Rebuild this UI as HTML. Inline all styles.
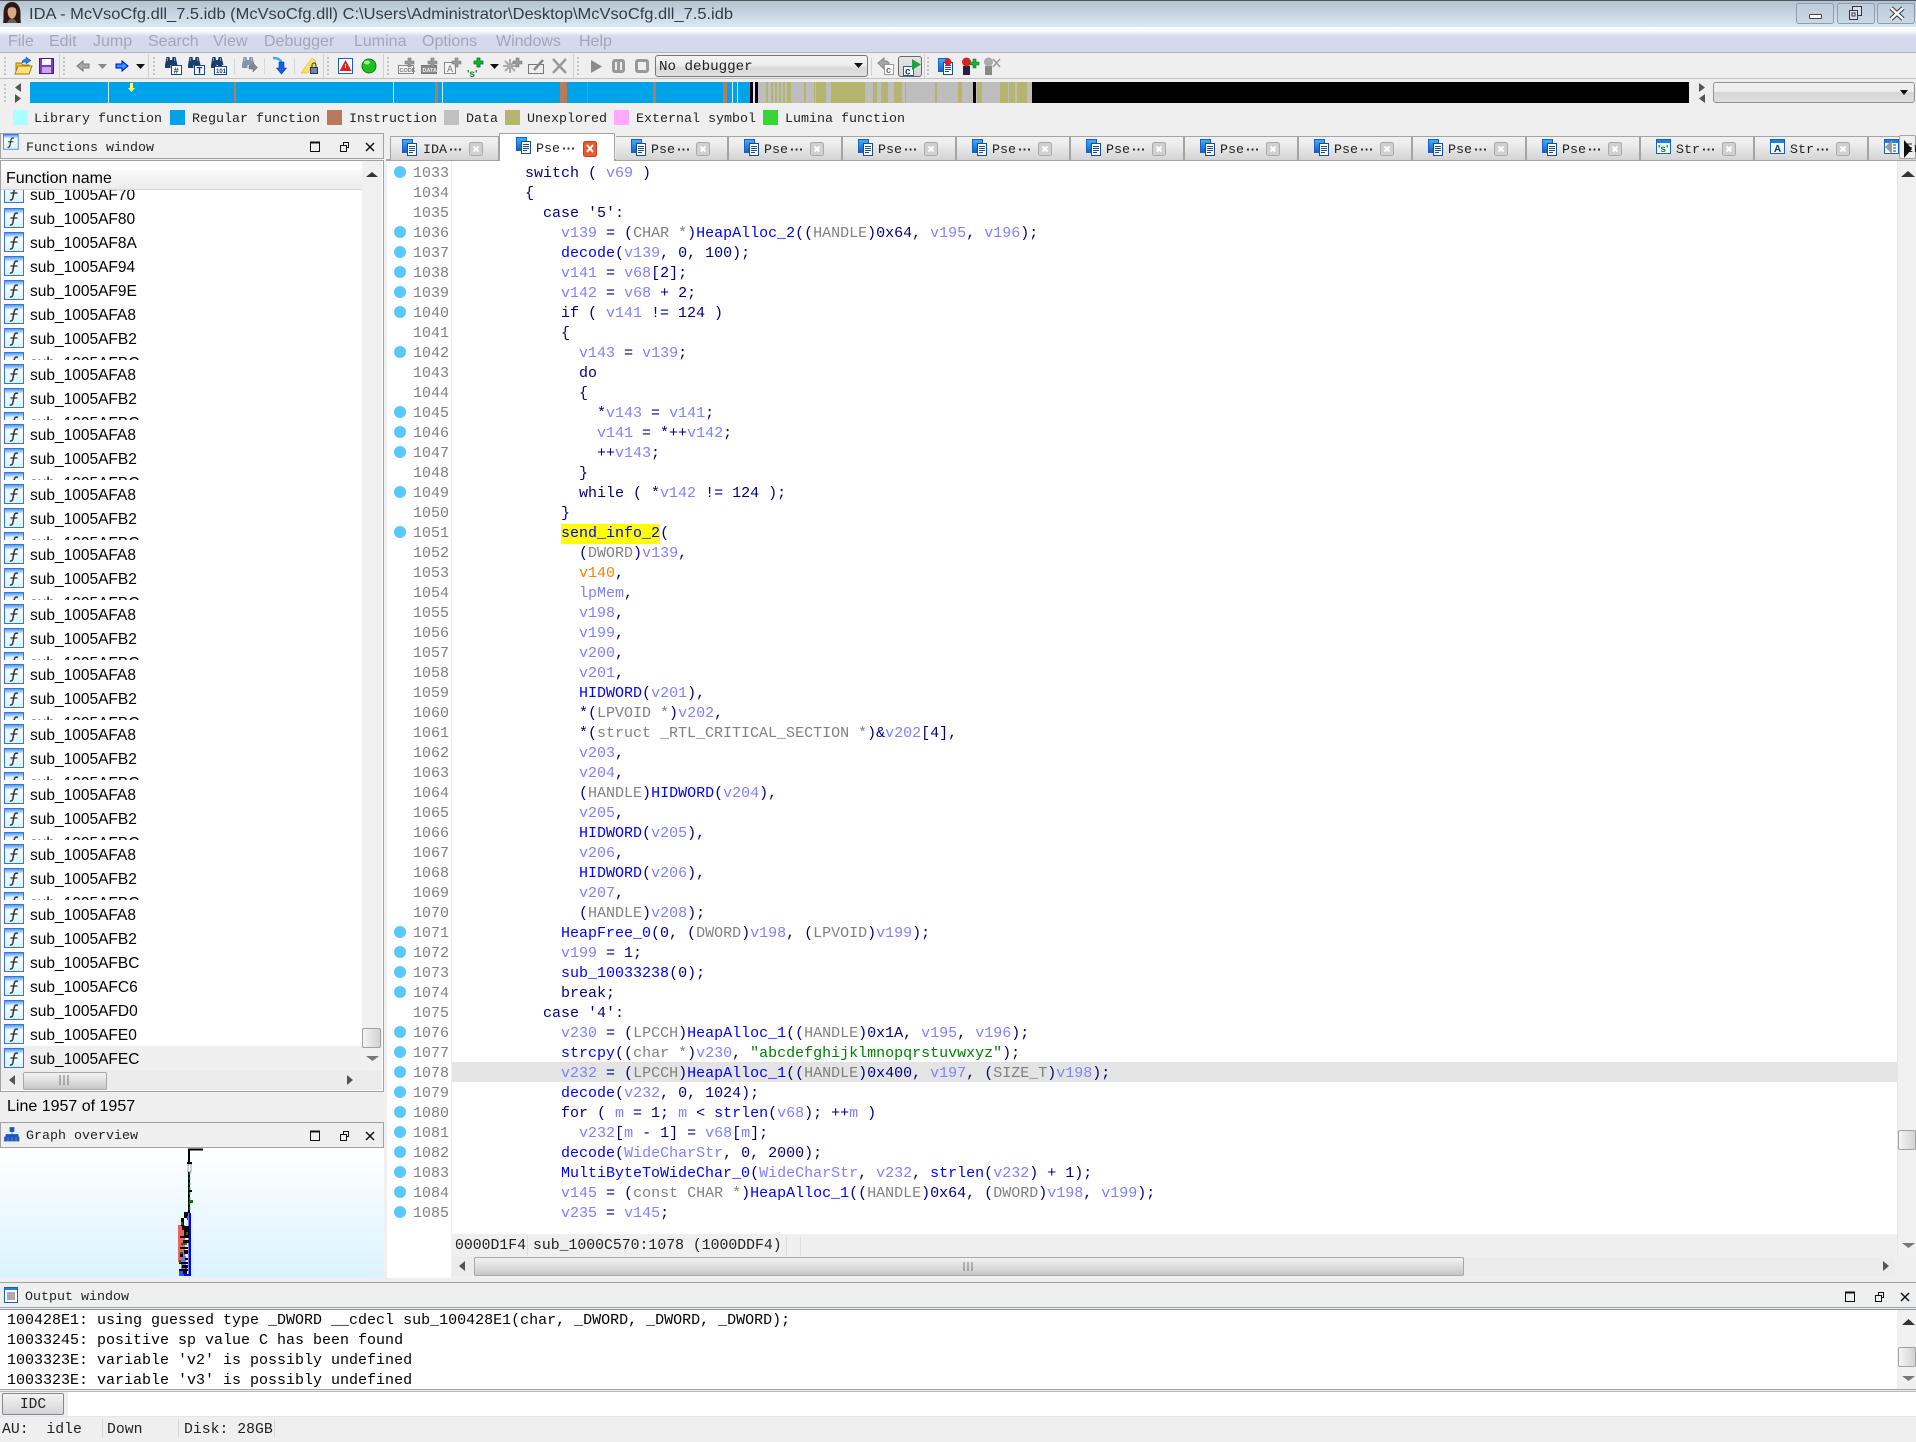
<!DOCTYPE html>
<html><head><meta charset="utf-8"><title>IDA</title>
<style>
html,body{margin:0;padding:0;background:#efefef}
body{position:relative;width:1916px;height:1439px;overflow:hidden;font-family:"Liberation Sans",sans-serif}
div,pre,span.a{position:absolute;margin:0}
pre{font:15px/20px "Liberation Mono","DejaVu Sans Mono",monospace}
.mt{font:13.33px/25px "Liberation Mono","DejaVu Sans Mono",monospace;color:#222;white-space:pre}
.mi{top:27px;height:25px;font-size:16px;line-height:30px;color:#a0a8b6;white-space:pre}
#code{left:453px;top:164px;color:#000080;z-index:3}
#nums{left:413px;top:164px;color:#808080;z-index:3}
i{font-style:normal}
.v{color:#8080ff}.f{color:#0000ff}.t{color:#808080}.s{color:#008000}.o{color:#ff8000}
.y{background:#ffff00;display:inline-block;height:20px;vertical-align:top}
.d{letter-spacing:-3.5px;font-weight:bold}
.r{left:1px;width:361px;height:24px;overflow:hidden;background:#fff}
.r svg{position:absolute;left:3px;top:2px}
.r b{position:absolute;left:29px;top:2px;font:15.5px/24px "Liberation Sans",sans-serif;color:#000;white-space:pre}
.tab{top:136px;height:23px;background:linear-gradient(#f1f1f1,#ededed 30%,#d4d4d4);border-top:1px solid #a4a4a4;border-right:2px solid #a4a4a4}
.tt{position:absolute;left:35px;top:1px;font:13.33px/25px "Liberation Mono","DejaVu Sans Mono",monospace;color:#222;white-space:pre}
.sl{height:1px;background:#a2a2a2;left:0;width:1916px}
.th{background:linear-gradient(90deg,#f4f4f4,#d2d2d2);border:1px solid #a0a0a0;border-radius:2px;box-sizing:border-box}
.hh{background:linear-gradient(#f2f2f2,#dedede 50%,#c6c6c6);border:1px solid #a8a8a8;border-radius:2px;box-sizing:border-box}
.st{font:14.8px/23px "Liberation Mono","DejaVu Serif",monospace;color:#222;white-space:pre;top:1419px}
.lg{top:110px;width:15px;height:15px}
.ll{top:107px}
.b{top:82px;height:21px}
</style></head><body>

<!-- title bar -->
<div style="left:0;top:0;width:1916px;height:27px;background:linear-gradient(#b3c3d1,#dbe8f2);border-top:1px solid #555;box-sizing:border-box"></div>
<!-- menu -->
<div style="left:0;top:27px;width:1916px;height:25px;background:linear-gradient(#fff,#f4f6fb 20%,#d4daec 38%,#d4daec);border-bottom:1px solid #b2b6c4"></div>
<div class="mi" style="left:8px">File</div><div class="mi" style="left:49px">Edit</div><div class="mi" style="left:93px">Jump</div><div class="mi" style="left:148px">Search</div><div class="mi" style="left:213px">View</div><div class="mi" style="left:264px">Debugger</div><div class="mi" style="left:354px">Lumina</div><div class="mi" style="left:422px">Options</div><div class="mi" style="left:496px">Windows</div><div class="mi" style="left:579px">Help</div>
<!-- toolbar rule -->
<div style="left:0;top:78px;width:1916px;height:1px;background:#c0c0c0"></div>

<!-- nav band -->
<div class="b" style="left:30px;width:720px;background:#00a2e8"></div>
<div class="b" style="left:108px;width:1px;background:#cfeeff"></div>
<div class="b" style="left:234px;width:2px;background:#b87a5c"></div>
<div class="b" style="left:393px;width:1px;background:#cfeeff"></div>
<div class="b" style="left:435px;width:3px;background:#b87a5c"></div>
<div class="b" style="left:442px;width:1px;background:#cfeeff"></div>
<div class="b" style="left:560px;width:7px;background:#b87a5c"></div>
<div class="b" style="left:587px;width:1px;background:#b87a5c"></div>
<div class="b" style="left:653px;width:3px;background:#b87a5c"></div>
<div class="b" style="left:723px;width:4px;background:#b87a5c"></div>
<div class="b" style="left:732px;width:1px;background:#cfeeff"></div>
<div class="b" style="left:737px;width:1px;background:#cfeeff"></div>
<div class="b" style="left:750px;width:3px;background:#000"></div>
<div class="b" style="left:753px;width:2px;background:#ffd0ff"></div>
<div class="b" style="left:755px;width:3px;background:#000"></div>
<div class="b" style="left:758px;width:274px;background:#bdbdbd"></div>
<div class="b" style="left:766px;width:2px;background:#b5b56e"></div><div class="b" style="left:771px;width:2px;background:#b5b56e"></div><div class="b" style="left:775px;width:2px;background:#b5b56e"></div><div class="b" style="left:779px;width:2px;background:#b5b56e"></div><div class="b" style="left:783px;width:2px;background:#b5b56e"></div><div class="b" style="left:787px;width:4px;background:#b5b56e"></div>
<div class="b" style="left:804px;width:2px;background:#b5b56e"></div><div class="b" style="left:814px;width:1px;background:#b5b56e"></div><div class="b" style="left:816px;width:10px;background:#b5b56e"></div><div class="b" style="left:831px;width:34px;background:#b5b56e"></div>
<div class="b" style="left:873px;width:4px;background:#b5b56e"></div><div class="b" style="left:881px;width:7px;background:#b5b56e"></div><div class="b" style="left:894px;width:8px;background:#b5b56e"></div><div class="b" style="left:905px;width:1px;background:#b5b56e"></div><div class="b" style="left:935px;width:2px;background:#b5b56e"></div><div class="b" style="left:958px;width:4px;background:#b5b56e"></div>
<div class="b" style="left:973px;width:3px;background:#000"></div><div class="b" style="left:977px;width:5px;background:#b5b56e"></div>
<div class="b" style="left:1000px;width:8px;background:#b5b56e"></div><div class="b" style="left:1009px;width:6px;background:#b5b56e"></div><div class="b" style="left:1017px;width:10px;background:#b5b56e"></div>
<div class="b" style="left:1032px;width:657px;background:#000"></div>

<!-- combo right -->
<div style="left:1713px;top:82px;width:200px;height:19px;border:1px solid #909090;border-radius:3px;background:linear-gradient(#f0f0f0,#ededed 45%,#d6d6d6 50%,#dedede)"></div>

<!-- legend -->
<div class="lg" style="left:13px;background:#aaffff"></div><div class="mt ll" style="left:34px">Library function</div>
<div class="lg" style="left:170px;background:#00a2e8"></div><div class="mt ll" style="left:192px">Regular function</div>
<div class="lg" style="left:327px;background:#b87a5c"></div><div class="mt ll" style="left:349px">Instruction</div>
<div class="lg" style="left:444px;background:#c0c0c0"></div><div class="mt ll" style="left:466px">Data</div>
<div class="lg" style="left:505px;background:#b5b56e"></div><div class="mt ll" style="left:527px">Unexplored</div>
<div class="lg" style="left:614px;background:#ffaaff"></div><div class="mt ll" style="left:636px">External symbol</div>
<div class="lg" style="left:763px;background:#33d633"></div><div class="mt ll" style="left:785px">Lumina function</div>

<!-- Functions window -->
<div style="left:0;top:133px;width:382px;height:24px;border:1px solid #a2a2a2;background:#efefef"></div>
<div class="mt" style="left:26px;top:136px">Functions window</div>
<div style="left:0;top:160px;width:382px;height:930px;border:1px solid #a2a2a2;background:#fff"></div>
<div style="left:362px;top:161px;width:20px;height:929px;background:#f0f0f0"></div>
<div class="th" style="left:362px;top:1028px;width:19px;height:20px"></div>

<div style="left:1px;top:161px;width:361px;height:29px;background:linear-gradient(#fff 30%,#f8f8f8 35%,#ececec);border-bottom:1px solid #d4d4d4;z-index:4;box-sizing:border-box"></div>
<div style="left:6px;top:169px;font:16px/20px 'Liberation Sans',sans-serif;color:#000;z-index:5">Function name</div>

<div class="r" style="top:190px;height:16px"><svg width="20" height="20" style="top:-7px"><use href="#fi"/></svg><b style="top:-6px">sub_1005AF70</b></div>
<div class="r" style="top:206px"><svg width="20" height="20"><use href="#fi"/></svg><b>sub_1005AF80</b></div>
<div class="r" style="top:230px"><svg width="20" height="20"><use href="#fi"/></svg><b>sub_1005AF8A</b></div>
<div class="r" style="top:254px"><svg width="20" height="20"><use href="#fi"/></svg><b>sub_1005AF94</b></div>
<div class="r" style="top:278px"><svg width="20" height="20"><use href="#fi"/></svg><b>sub_1005AF9E</b></div>
<div class="r" style="top:302px"><svg width="20" height="20"><use href="#fi"/></svg><b>sub_1005AFA8</b></div>
<div class="r" style="top:326px"><svg width="20" height="20"><use href="#fi"/></svg><b>sub_1005AFB2</b></div>
<div class="r" style="top:350px;height:10px"><svg width="20" height="20"><use href="#fi"/></svg><b>sub_1005AFBC</b></div>

<div class="r" style="top:362px"><svg width="20" height="20"><use href="#fi"/></svg><b>sub_1005AFA8</b></div>
<div class="r" style="top:386px"><svg width="20" height="20"><use href="#fi"/></svg><b>sub_1005AFB2</b></div>
<div class="r" style="top:410px;height:10px"><svg width="20" height="20"><use href="#fi"/></svg><b>sub_1005AFBC</b></div>
<div class="r" style="top:422px"><svg width="20" height="20"><use href="#fi"/></svg><b>sub_1005AFA8</b></div>
<div class="r" style="top:446px"><svg width="20" height="20"><use href="#fi"/></svg><b>sub_1005AFB2</b></div>
<div class="r" style="top:470px;height:10px"><svg width="20" height="20"><use href="#fi"/></svg><b>sub_1005AFBC</b></div>
<div class="r" style="top:482px"><svg width="20" height="20"><use href="#fi"/></svg><b>sub_1005AFA8</b></div>
<div class="r" style="top:506px"><svg width="20" height="20"><use href="#fi"/></svg><b>sub_1005AFB2</b></div>
<div class="r" style="top:530px;height:10px"><svg width="20" height="20"><use href="#fi"/></svg><b>sub_1005AFBC</b></div>
<div class="r" style="top:542px"><svg width="20" height="20"><use href="#fi"/></svg><b>sub_1005AFA8</b></div>
<div class="r" style="top:566px"><svg width="20" height="20"><use href="#fi"/></svg><b>sub_1005AFB2</b></div>
<div class="r" style="top:590px;height:10px"><svg width="20" height="20"><use href="#fi"/></svg><b>sub_1005AFBC</b></div>
<div class="r" style="top:602px"><svg width="20" height="20"><use href="#fi"/></svg><b>sub_1005AFA8</b></div>
<div class="r" style="top:626px"><svg width="20" height="20"><use href="#fi"/></svg><b>sub_1005AFB2</b></div>
<div class="r" style="top:650px;height:10px"><svg width="20" height="20"><use href="#fi"/></svg><b>sub_1005AFBC</b></div>
<div class="r" style="top:662px"><svg width="20" height="20"><use href="#fi"/></svg><b>sub_1005AFA8</b></div>
<div class="r" style="top:686px"><svg width="20" height="20"><use href="#fi"/></svg><b>sub_1005AFB2</b></div>
<div class="r" style="top:710px;height:10px"><svg width="20" height="20"><use href="#fi"/></svg><b>sub_1005AFBC</b></div>
<div class="r" style="top:722px"><svg width="20" height="20"><use href="#fi"/></svg><b>sub_1005AFA8</b></div>
<div class="r" style="top:746px"><svg width="20" height="20"><use href="#fi"/></svg><b>sub_1005AFB2</b></div>
<div class="r" style="top:770px;height:10px"><svg width="20" height="20"><use href="#fi"/></svg><b>sub_1005AFBC</b></div>
<div class="r" style="top:782px"><svg width="20" height="20"><use href="#fi"/></svg><b>sub_1005AFA8</b></div>
<div class="r" style="top:806px"><svg width="20" height="20"><use href="#fi"/></svg><b>sub_1005AFB2</b></div>
<div class="r" style="top:830px;height:10px"><svg width="20" height="20"><use href="#fi"/></svg><b>sub_1005AFBC</b></div>
<div class="r" style="top:842px"><svg width="20" height="20"><use href="#fi"/></svg><b>sub_1005AFA8</b></div>
<div class="r" style="top:866px"><svg width="20" height="20"><use href="#fi"/></svg><b>sub_1005AFB2</b></div>
<div class="r" style="top:890px;height:10px"><svg width="20" height="20"><use href="#fi"/></svg><b>sub_1005AFBC</b></div>
<div class="r" style="top:902px"><svg width="20" height="20"><use href="#fi"/></svg><b>sub_1005AFA8</b></div>
<div class="r" style="top:926px"><svg width="20" height="20"><use href="#fi"/></svg><b>sub_1005AFB2</b></div>
<div class="r" style="top:950px"><svg width="20" height="20"><use href="#fi"/></svg><b>sub_1005AFBC</b></div>
<div class="r" style="top:974px"><svg width="20" height="20"><use href="#fi"/></svg><b>sub_1005AFC6</b></div>
<div class="r" style="top:998px"><svg width="20" height="20"><use href="#fi"/></svg><b>sub_1005AFD0</b></div>
<div class="r" style="top:1022px"><svg width="20" height="20"><use href="#fi"/></svg><b>sub_1005AFE0</b></div>
<div class="r" style="top:1046px;height:25px;background:#efefef"><svg width="20" height="20"><use href="#fi"/></svg><b>sub_1005AFEC</b></div>

<div style="left:1px;top:1071px;width:381px;height:19px;background:#ececec"></div>
<div class="hh" style="left:23px;top:1072px;width:84px;height:18px"></div>

<div style="left:7px;top:1095px;font:16px/24px 'Liberation Sans',sans-serif;color:#000;white-space:pre">Line 1957 of 1957</div>

<!-- Graph overview -->
<div style="left:0;top:1122px;width:382px;height:24px;border:1px solid #a2a2a2;background:#efefef"></div>
<div class="mt" style="left:26px;top:1124px">Graph overview</div>
<div style="left:0;top:1148px;width:384px;height:130px;background:linear-gradient(#fff,#dbf3ff)"></div>

<!-- tabs -->
<div style="left:386px;top:159px;width:1530px;height:2px;background:#a4a4a4"></div>
<div class="tab" style="left:390px;width:107px;border-left:1px solid #a4a4a4"><span class="tt" style="left:32px">IDA<i class="d">···</i></span></div>
<div class="tab" style="left:616px;width:111px"><span class="tt">Pse<i class="d">···</i></span></div>
<div class="tab" style="left:729px;width:112px"><span class="tt">Pse<i class="d">···</i></span></div>
<div class="tab" style="left:843px;width:112px"><span class="tt">Pse<i class="d">···</i></span></div>
<div class="tab" style="left:957px;width:112px"><span class="tt">Pse<i class="d">···</i></span></div>
<div class="tab" style="left:1071px;width:112px"><span class="tt">Pse<i class="d">···</i></span></div>
<div class="tab" style="left:1185px;width:112px"><span class="tt">Pse<i class="d">···</i></span></div>
<div class="tab" style="left:1299px;width:112px"><span class="tt">Pse<i class="d">···</i></span></div>
<div class="tab" style="left:1413px;width:112px"><span class="tt">Pse<i class="d">···</i></span></div>
<div class="tab" style="left:1527px;width:112px"><span class="tt">Pse<i class="d">···</i></span></div>
<div class="tab" style="left:1641px;width:112px"><span class="tt">Str<i class="d">···</i></span></div>
<div class="tab" style="left:1755px;width:112px"><span class="tt">Str<i class="d">···</i></span></div>
<div class="tab" style="left:1869px;width:47px;border-right:0"></div>
<div style="left:499px;top:133px;width:116px;height:28px;background:#fff;border:1px solid #a4a4a4;border-bottom:0;box-sizing:border-box"><span class="tt" style="left:36px;top:3px">Pse<i class="d">···</i></span></div>
<div style="left:1899px;top:135px;width:17px;height:24px;background:#efefef;border:1px solid #a4a4a4;border-radius:2px;box-sizing:border-box"></div>
<div class="mt" style="left:1905px;top:137px;width:11px;overflow:hidden;z-index:2">Er</div>

<!-- code view -->
<div style="left:387px;top:161px;width:64px;height:1117px;background:#fff"></div>
<div style="left:451px;top:161px;width:1px;height:1073px;background:#f0f0f0"></div>
<div style="left:452px;top:161px;width:1445px;height:1073px;background:#fff"></div>
<div style="left:1897px;top:161px;width:19px;height:1095px;background:#f0f0f0;border-left:1px solid #e6e6e6;box-sizing:border-box"></div>
<div class="th" style="left:1898px;top:1130px;width:18px;height:20px"></div>
<div style="left:452px;top:1062px;width:1445px;height:20px;background:#e4e4e4"></div>

<pre id="nums">1033
1034
1035
1036
1037
1038
1039
1040
1041
1042
1043
1044
1045
1046
1047
1048
1049
1050
1051
1052
1053
1054
1055
1056
1057
1058
1059
1060
1061
1062
1063
1064
1065
1066
1067
1068
1069
1070
1071
1072
1073
1074
1075
1076
1077
1078
1079
1080
1081
1082
1083
1084
1085</pre>

<pre id="code">        switch ( <i class="v">v69</i> )
        {
          case '5':
            <i class="v">v139</i> = (<i class="t">CHAR *</i>)<i class="f">HeapAlloc_2</i>((<i class="t">HANDLE</i>)0x64, <i class="v">v195</i>, <i class="v">v196</i>);
            <i class="f">decode</i>(<i class="v">v139</i>, 0, 100);
            <i class="v">v141</i> = <i class="v">v68</i>[2];
            <i class="v">v142</i> = <i class="v">v68</i> + 2;
            if ( <i class="v">v141</i> != 124 )
            {
              <i class="v">v143</i> = <i class="v">v139</i>;
              do
              {
                *<i class="v">v143</i> = <i class="v">v141</i>;
                <i class="v">v141</i> = *++<i class="v">v142</i>;
                ++<i class="v">v143</i>;
              }
              while ( *<i class="v">v142</i> != 124 );
            }
            <i class="f y">send_info_2</i>(
              (<i class="t">DWORD</i>)<i class="v">v139</i>,
              <i class="o">v140</i>,
              <i class="v">lpMem</i>,
              <i class="v">v198</i>,
              <i class="v">v199</i>,
              <i class="v">v200</i>,
              <i class="v">v201</i>,
              <i class="f">HIDWORD</i>(<i class="v">v201</i>),
              *(<i class="t">LPVOID *</i>)<i class="v">v202</i>,
              *(<i class="t">struct _RTL_CRITICAL_SECTION *</i>)&amp;<i class="v">v202</i>[4],
              <i class="v">v203</i>,
              <i class="v">v204</i>,
              (<i class="t">HANDLE</i>)<i class="f">HIDWORD</i>(<i class="v">v204</i>),
              <i class="v">v205</i>,
              <i class="f">HIDWORD</i>(<i class="v">v205</i>),
              <i class="v">v206</i>,
              <i class="f">HIDWORD</i>(<i class="v">v206</i>),
              <i class="v">v207</i>,
              (<i class="t">HANDLE</i>)<i class="v">v208</i>);
            <i class="f">HeapFree_0</i>(0, (<i class="t">DWORD</i>)<i class="v">v198</i>, (<i class="t">LPVOID</i>)<i class="v">v199</i>);
            <i class="v">v199</i> = 1;
            <i class="f">sub_10033238</i>(0);
            break;
          case '4':
            <i class="v">v230</i> = (<i class="t">LPCCH</i>)<i class="f">HeapAlloc_1</i>((<i class="t">HANDLE</i>)0x1A, <i class="v">v195</i>, <i class="v">v196</i>);
            <i class="f">strcpy</i>((<i class="t">char *</i>)<i class="v">v230</i>, <i class="s">"abcdefghijklmnopqrstuvwxyz"</i>);
            <i class="v">v232</i> = (<i class="t">LPCCH</i>)<i class="f">HeapAlloc_1</i>((<i class="t">HANDLE</i>)0x400, <i class="v">v197</i>, (<i class="t">SIZE_T</i>)<i class="v">v198</i>);
            <i class="f">decode</i>(<i class="v">v232</i>, 0, 1024);
            for ( <i class="v">m</i> = 1; <i class="v">m</i> &lt; <i class="f">strlen</i>(<i class="v">v68</i>); ++<i class="v">m</i> )
              <i class="v">v232</i>[<i class="v">m</i> - 1] = <i class="v">v68</i>[<i class="v">m</i>];
            <i class="f">decode</i>(<i class="v">WideCharStr</i>, 0, 2000);
            <i class="f">MultiByteToWideChar_0</i>(<i class="v">WideCharStr</i>, <i class="v">v232</i>, <i class="f">strlen</i>(<i class="v">v232</i>) + 1);
            <i class="v">v145</i> = (<i class="t">const CHAR *</i>)<i class="f">HeapAlloc_1</i>((<i class="t">HANDLE</i>)0x64, (<i class="t">DWORD</i>)<i class="v">v198</i>, <i class="v">v199</i>);
            <i class="v">v235</i> = <i class="v">v145</i>;</pre>

<!-- code status / hscroll -->
<div style="left:452px;top:1234px;width:1445px;height:23px;background:#efefef"></div>
<div class="st" style="left:455px;top:1235px">0000D1F4</div>
<div class="st" style="left:533px;top:1235px">sub_1000C570:1078 (1000DDF4)</div>
<div style="left:527px;top:1236px;width:1px;height:20px;background:#dcdcdc"></div>
<div style="left:786px;top:1236px;width:1px;height:20px;background:#dcdcdc"></div>
<div style="left:800px;top:1236px;width:1px;height:20px;background:#dcdcdc"></div>
<div style="left:452px;top:1257px;width:1443px;height:19px;background:#ececec"></div>
<div class="hh" style="left:474px;top:1257px;width:990px;height:19px"></div>

<!-- output window -->
<div class="sl" style="top:1282px"></div>
<div class="mt" style="left:25px;top:1285px">Output window</div>
<div class="sl" style="top:1307px"></div>
<div class="sl" style="top:1309px;background:#8a929a"></div>
<div style="left:0;top:1310px;width:1916px;height:79px;background:#fff"></div>
<div style="left:1897px;top:1310px;width:19px;height:79px;background:#f0f0f0"></div>
<div class="th" style="left:1898px;top:1347px;width:18px;height:20px"></div>
<pre style="left:7px;top:1311px;color:#000">100428E1: using guessed type _DWORD __cdecl sub_100428E1(char, _DWORD, _DWORD, _DWORD);
10033245: positive sp value C has been found
1003323E: variable 'v2' is possibly undefined
1003323E: variable 'v3' is possibly undefined</pre>
<div class="sl" style="top:1389px"></div>
<div class="sl" style="top:1391px;background:#b8b8b8"></div>
<div style="left:68px;top:1392px;width:1848px;height:24px;background:#fff"></div>
<div class="hh" style="left:2px;top:1393px;width:62px;height:22px;background:linear-gradient(#f4f4f4,#e4e4e4 50%,#d4d4d4);border-color:#888;font:14.5px/23px 'Liberation Mono',monospace;color:#222;text-align:center">IDC</div>
<div style="left:0;top:1416px;width:1916px;height:1px;background:#e2e6ee"></div>
<div class="st" style="left:2px">AU:  idle</div>
<div class="st" style="left:107px">Down</div>
<div class="st" style="left:184px">Disk: 28GB</div>
<div style="left:102px;top:1419px;width:1px;height:18px;background:#d8d8d8"></div>
<div style="left:178px;top:1419px;width:1px;height:18px;background:#d8d8d8"></div>
<div style="left:274px;top:1419px;width:1px;height:18px;background:#d8d8d8"></div>

<!-- combo debugger -->
<div style="left:655px;top:55px;width:211px;height:20px;border:1px solid #777;border-radius:3px;background:linear-gradient(#f2f2f2,#eeeeee 45%,#d8d8d8 60%,#e0e0e0);font:14.2px/23px 'Liberation Mono',monospace;color:#222;text-indent:3px">No debugger</div>
<div style="left:898px;top:56px;width:22px;height:19px;border:1px solid #666;border-radius:3px;background:linear-gradient(#e4e4e4,#d4d4d4)"></div>

<!-- overlay icons -->
<svg width="1916" height="1439" viewBox="0 0 1916 1439" style="position:absolute;left:0;top:0;z-index:6" xmlns="http://www.w3.org/2000/svg">
<defs>
<linearGradient id="gf" x1="0" y1="0" x2="0" y2="1"><stop offset="0" stop-color="#3f8df0"/><stop offset=".2" stop-color="#9fd0ff"/><stop offset=".3" stop-color="#f2fcff"/><stop offset="1" stop-color="#d8f4ff"/></linearGradient>
<linearGradient id="gb" x1="0" y1="0" x2="0" y2="1"><stop offset="0" stop-color="#40b0ff"/><stop offset="1" stop-color="#1060c0"/></linearGradient>
<g id="doc"><rect x=".5" y=".5" width="10" height="13" fill="url(#gb)" stroke="#1a5fc0"/><rect x="5.500" y="4.500" width="9" height="12" fill="#fff" stroke="#1a4a90"/><path d="M7 7.500h6M7 9.500h6M7 11.500h6M7 13.500h4" stroke="#1a4a90" fill="none"/></g>
<g id="bino"><path d="M1.500 0h3l.5 3h2l.5-3h3l2 8H0z" fill="#1c3c6c"/><path d="M0 8h5.500v3H0zM7 8h4v3H7z" fill="#1c3c6c"/><path d="M2 1h1v3H2zM9 1h1v3H9z" fill="#6a9ad0"/></g>
<g id="xbtn"><rect x=".5" y=".5" width="13" height="13" rx="2" fill="#d0d0d0" stroke="#aaa"/><path d="M4.500 4.500l5 5M9.500 4.500l-5 5" stroke="#fff" stroke-width="2"/></g>
<g id="dots"><path d="M0 0h2v2H0zM0 4h2v2H0zM0 8h2v2H0zM0 12h2v2H0zM0 16h2v2H0z" fill="#c4c4c4"/></g>
<path id="plusg" d="M3 0h3v3h3v3H6v3H3V6H0V3h3z" fill="#999" stroke="#777" stroke-width=".6"/>
</defs>

<!-- title -->
<path d="M3 23c1-4 0-10 1-14 1-5 5-7 8-7 4 0 7 3 8 7 1 4 0 10 1 14z" fill="#2a1a14"/><path d="M8 9c1-2 6-3 8 0 1 3 0 7-2 9l-2 1-2-1c-2-2-3-6-2-9z" fill="#d8a888"/><path d="M7 23c1-3 3-4 5-4s4 1 5 4z" fill="#7a5a50"/>
<text x="29" y="19" font-family="Liberation Sans" font-size="16" fill="#333d47" textLength="704" lengthAdjust="spacingAndGlyphs">IDA - McVsoCfg.dll_7.5.idb (McVsoCfg.dll) C:\Users\Administrator\Desktop\McVsoCfg.dll_7.5.idb</text>
<g fill="#c2d0dc" fill-opacity=".6" stroke="#8c9db3"><rect x="1796.500" y="3.500" width="37" height="20" rx="2"/><rect x="1837.500" y="3.500" width="37" height="20" rx="2"/><rect x="1877.500" y="3.500" width="37" height="20" rx="2"/></g>
<rect x="1809.500" y="14.500" width="12" height="4" rx="1" fill="#fff" stroke="#444"/>
<path d="M1852.500 6.500h9v9h-9z" fill="#d8e0e8" stroke="#334"/><rect x="1849.500" y="10.500" width="8" height="9" fill="#d8e0e8" stroke="#334"/><rect x="1852" y="13" width="3" height="3" fill="#fff" stroke="#334"/>
<path d="M1891 8l12 11M1903 8l-12 11" stroke="#334" stroke-width="4.500"/><path d="M1891 8l12 11M1903 8l-12 11" stroke="#fff" stroke-width="2.500"/>

<!-- toolbar -->
<use href="#dots" x="4" y="57"/><use href="#dots" x="63" y="57"/><use href="#dots" x="153" y="57"/><use href="#dots" x="327" y="57"/><use href="#dots" x="387" y="57"/><use href="#dots" x="577" y="57"/><use href="#dots" x="927" y="57"/><use href="#dots" x="4" y="84"/>
<path d="M59.500 54v24M148.500 54v24M323.500 54v24M383.500 54v24M573.500 54v24M871.500 58v18M924.500 54v24" stroke="#d0d0d0" fill="none"/>
<path d="M234.500 58v16M264.500 58v16M294.500 58v16" stroke="#d8d8d8" fill="none"/>
<!-- folder / save -->
<path d="M16 74V63h5l2 2h6v9z" fill="#f6c94a" stroke="#a87a10"/><path d="M15 74l3-8h14l-3 8z" fill="#ffe27a" stroke="#a87a10"/><path d="M22 63c0-3 2-4 4-4v-2l5 3.500-5 3.500v-2c-2 0-3 .5-4 1z" fill="#2a7fe0" stroke="#1050b0" stroke-width=".5"/>
<rect x="39.500" y="58.500" width="14" height="15" fill="#8038c8" stroke="#4a1a8a"/><rect x="42" y="59" width="9" height="6" fill="#fff"/><rect x="42" y="67" width="9" height="6" fill="#c8a8e8"/>
<!-- nav arrows toolbar -->
<path d="M77 66l6-5v3h6v4h-6v3z" fill="#a8a8a8" stroke="#777"/><path d="M98 64h9l-4.500 5z" fill="#888"/>
<path d="M128 66l-6-5v3h-6v4h6v3z" fill="#20a0f8" stroke="#0000e0"/><path d="M136 64h9l-4.500 5z" fill="#111"/>
<!-- search -->
<use href="#bino" x="165" y="57"/><rect x="171.500" y="65.500" width="10" height="9" fill="#fff" stroke="#14458a"/><text x="173.500" y="73.500" font-family="Liberation Mono" font-size="9" font-weight="bold" fill="#14355f">#</text>
<use href="#bino" x="188" y="57"/><rect x="194.500" y="65.500" width="10" height="9" fill="#fff" stroke="#14458a"/><text x="196.500" y="73.500" font-family="Liberation Mono" font-size="10" font-weight="bold" fill="#14355f">T</text>
<use href="#bino" x="211" y="57"/><rect x="214.500" y="66.500" width="12" height="8" fill="#fff" stroke="#14458a"/><text x="216" y="73" font-family="Liberation Sans" font-size="6" font-weight="bold" fill="#14355f">101</text>
<g opacity=".5"><use href="#bino" x="242" y="57"/></g><path d="M249 66h4v-3l4.500 4.500-4.500 4.500v-3h-4z" fill="#888" stroke="#666" stroke-width=".5"/>
<path d="M273 58c5 0 8 1.500 9 6" stroke="#30b0ff" stroke-width="2.500" fill="none"/><path d="M279 62h5v6h2.500l-5 6-5-6h2.500z" fill="#1060e0" stroke="#0a3f9a" stroke-width=".6"/>
<path d="M301 73l5-7 6-8 4 3-1 5h-4l-3 7z" fill="#ffe060" stroke="#d0a820" stroke-width=".5"/><rect x="310.500" y="67.500" width="7" height="6" fill="#6a88a8" stroke="#334"/><path d="M312 67v-2a2 2 0 014 0v2" stroke="#334" fill="none"/>
<!-- debug box -->
<rect x="338.500" y="58.500" width="14" height="15" fill="#fff" stroke="#1a5fc0"/><path d="M345.500 60l6 11h-12z" fill="#e02020"/><path d="M345.500 64v4" stroke="#fff"/>
<circle cx="369" cy="66" r="7" fill="#20c020" stroke="#108010"/><ellipse cx="367" cy="62.500" rx="3" ry="2" fill="#a0f0a0"/>
<!-- add icons -->
<rect x="398.500" y="65.500" width="15" height="8" fill="#f4f4f4" stroke="#888"/><text x="399.500" y="72" font-family="Liberation Sans" font-size="5.5" font-weight="bold" fill="#777">CODE</text><use href="#plusg" x="405" y="58"/>
<rect x="421.500" y="65.500" width="15" height="8" fill="#888" stroke="#777"/><text x="422.500" y="72" font-family="Liberation Sans" font-size="5.500" font-weight="bold" fill="#eee">DATA</text><use href="#plusg" x="428" y="58"/>
<rect x="444.500" y="62.500" width="11" height="11" fill="#f4f4f4" stroke="#888"/><text x="447" y="72" font-family="Liberation Sans" font-size="9" fill="#777">A</text><use href="#plusg" x="452" y="58"/>
<path d="M477 58h3v3h3v3h-3v3h-3v-3h-3v-3h3z" fill="#10c010" stroke="#064" stroke-width=".8"/><text x="467" y="77" font-family="Liberation Sans" font-size="10" font-weight="bold" fill="#208020">'s'</text>
<path d="M490 64h9l-4.500 5z" fill="#111"/>
<path d="M505 61l10 10M515 61l-10 10M510 59v14M503 66h14" stroke="#aaa" stroke-width="2"/><use href="#plusg" x="513" y="58"/>
<rect x="528.500" y="64.500" width="15" height="9" fill="#eee" stroke="#777"/><path d="M534 70l9-10" stroke="#888" stroke-width="2.500"/>
<path d="M553 59l13 14M566 59l-13 14" stroke="#999" stroke-width="2.500"/>
<path d="M591 60l11 6.500-11 6.500z" fill="#8a8a8a"/>
<rect x="612" y="59" width="13" height="14" rx="3" fill="#999"/><path d="M616 62v8M621 62v8" stroke="#eee" stroke-width="2"/>
<rect x="635" y="59" width="14" height="14" rx="3" fill="#999"/><rect x="638" y="62" width="8" height="8" fill="#eee"/>
<path d="M854 63h9l-4.500 5z" fill="#111"/>
<path d="M878 63l6-5v3h3l2 2v3h-5v3z" fill="#a8a8a8" stroke="#888"/><rect x="884.500" y="64.500" width="9" height="10" fill="#fff" stroke="#999"/><text x="886" y="73" font-family="Liberation Sans" font-size="9" font-weight="bold" fill="#666">c</text>
<rect x="903.500" y="66.500" width="10" height="9" fill="#fff" stroke="#1a5fc0"/><text x="905" y="74.500" font-family="Liberation Sans" font-size="10" font-weight="bold" fill="#14355f">c</text><path d="M912 59l9 5.500-9 5.500z" fill="#20a040"/>
<use href="#doc" x="938" y="58"/><circle cx="948" cy="62" r="3.500" fill="#e02020"/>
<rect x="963" y="66" width="7" height="9" fill="#224"/><circle cx="966.500" cy="62" r="4.500" fill="#e02020"/><path d="M973 59h3v3h3v3h-3v3h-3v-3h-3v-3h3z" fill="#20b020" stroke="#075" stroke-width=".6"/>
<rect x="985" y="66" width="7" height="9" fill="#888"/><circle cx="988.500" cy="62" r="4.500" fill="#aaa"/><path d="M993 59l7 8M1000 59l-7 8" stroke="#999" stroke-width="1.500"/>

<!-- nav arrows -->
<path d="M21 83v9l-6-4.500z M15 94v9l6-4.500z" fill="#555"/>
<path d="M1699 83v9l6-4.500z M1705 94v9l-6-4.500z" fill="#555"/>
<path d="M1900 90h8l-4 5z" fill="#111"/>
<path d="M130 83h3v5h2l-3.500 4-3.500-4h2z" fill="#ffff60"/>

<!-- panel title icons -->
<use href="#fi" transform="translate(3 134) scale(.78)"/>
<g fill="none" stroke="#111"><rect x="310.500" y="142.500" width="9" height="9" stroke-width="1"/><path d="M310 142.500h10" stroke-width="2"/><rect x="343.500" y="142.500" width="5" height="5"/><rect x="340.500" y="145.500" width="6" height="6" fill="#efefef"/><path d="M366 143l8 8M374 143l-8 8" stroke-width="1.500"/></g>
<g transform="translate(0 989)" fill="none" stroke="#111"><rect x="310.500" y="142.500" width="9" height="9" stroke-width="1"/><path d="M310 142.500h10" stroke-width="2"/><rect x="343.500" y="142.500" width="5" height="5"/><rect x="340.500" y="145.500" width="6" height="6" fill="#efefef"/><path d="M366 143l8 8M374 143l-8 8" stroke-width="1.500"/></g>
<g transform="translate(1535 1150)" fill="none" stroke="#111"><rect x="310.500" y="142.500" width="9" height="9" stroke-width="1"/><path d="M310 142.500h10" stroke-width="2"/><rect x="343.500" y="142.500" width="5" height="5"/><rect x="340.500" y="145.500" width="6" height="6" fill="#efefef"/><path d="M366 143l8 8M374 143l-8 8" stroke-width="1.500"/></g>

<!-- graph icon -->
<path d="M10 1127.500h4v4h-4zM4.500 1137h3v4h-3zM8.500 1137h3v4h-3zM12.500 1137h3v4h-3zM16.500 1137h2.500v4h-2.500zM6 1137v-2.500h12v2.500M12 1131.500v5.500M10 1134.500v2.500M14 1134.500v2.500" fill="#1a58c0" stroke="#1a58c0" stroke-width=".7"/>
<!-- output icon -->
<rect x="4.500" y="1287.500" width="13" height="15" fill="#fff" stroke="#1a5fc0"/><rect x="5" y="1288" width="12" height="2" fill="#2080e0"/><path d="M7 1293h8M7 1295h8M7 1297h8M7 1299h8" stroke="#555"/>

<!-- graph drawing -->
<path d="M189 1213v-63.500h14" stroke="#000" stroke-width="2" fill="none"/>
<rect x="188" y="1164" width="3" height="8" fill="#fff" stroke="#444" stroke-width=".5"/>
<path d="M189.500 1172v40" stroke="#107010" stroke-width="1.500" stroke-dasharray="3 2"/>
<rect x="187" y="1162" width="5" height="2" fill="#000"/><rect x="188" y="1190" width="4" height="2" fill="#000"/><rect x="189" y="1200" width="4" height="3" fill="#107010"/>
<rect x="178" y="1225" width="7" height="37" fill="#f06060"/>
<rect x="188.500" y="1213" width="2.500" height="63" fill="#0000ee"/><rect x="183" y="1274" width="8" height="2" fill="#0000ee"/>
<rect x="179" y="1270" width="5" height="6" fill="#4050f0"/><rect x="181" y="1256" width="5" height="14" fill="#7070ee"/>
<g fill="#000"><rect x="184" y="1212" width="4" height="6"/><rect x="181" y="1218" width="3" height="8"/><rect x="182" y="1226" width="7" height="4"/><rect x="184" y="1230" width="5" height="6"/><rect x="180" y="1236" width="9" height="2"/><rect x="183" y="1240" width="6" height="3"/><rect x="180" y="1247" width="8" height="2"/><rect x="184" y="1250" width="4" height="4"/><rect x="180" y="1254" width="3" height="3"/><rect x="185" y="1258" width="3" height="2"/><rect x="179" y="1262" width="9" height="2"/><rect x="182" y="1265" width="6" height="3"/><rect x="179" y="1269" width="9" height="2"/><rect x="183" y="1271" width="4" height="3"/></g>
<g fill="#107010"><rect x="181" y="1222" width="2" height="3"/><rect x="186" y="1232" width="2" height="3"/><rect x="181" y="1243" width="6" height="2"/><rect x="180" y="1252" width="3" height="2"/><rect x="179" y="1260" width="2" height="3"/><rect x="185" y="1268" width="2" height="1"/><rect x="187" y="1216" width="1" height="4"/></g>

<!-- function list arrows -->
<path d="M366 177l6-5 6 5z" fill="#333"/><path d="M366 1056h13l-6.500 5z" fill="#777"/>
<path d="M15 1075v10l-6-5z M347 1075v10l6-5z" fill="#555"/>
<path d="M60 1075v10M64 1075v10M68 1075v10" stroke="#777"/>

<!-- code scrollbars -->
<path d="M1901 177l7-6 7 6z" fill="#333"/><path d="M1902 1243h13l-6.500 5z" fill="#777"/>
<path d="M465 1261v10l-6-5z M1883 1261v10l6-5z" fill="#555"/>
<path d="M964 1262v9M968 1262v9M972 1262v9" stroke="#777"/>
<path d="M1902 1325l6.500-6 6.500 6z" fill="#333"/><path d="M1902 1376h13l-6.500 5z" fill="#777"/>

<!-- bp dots -->
<g fill="#5ac8ff"><circle cx="400" cy="172" r="6"/><circle cx="400" cy="232" r="6"/><circle cx="400" cy="252" r="6"/><circle cx="400" cy="272" r="6"/><circle cx="400" cy="292" r="6"/><circle cx="400" cy="312" r="6"/><circle cx="400" cy="352" r="6"/><circle cx="400" cy="412" r="6"/><circle cx="400" cy="432" r="6"/><circle cx="400" cy="452" r="6"/><circle cx="400" cy="492" r="6"/><circle cx="400" cy="532" r="6"/><circle cx="400" cy="932" r="6"/><circle cx="400" cy="952" r="6"/><circle cx="400" cy="972" r="6"/><circle cx="400" cy="992" r="6"/><circle cx="400" cy="1032" r="6"/><circle cx="400" cy="1052" r="6"/><circle cx="400" cy="1072" r="6"/><circle cx="400" cy="1092" r="6"/><circle cx="400" cy="1112" r="6"/><circle cx="400" cy="1132" r="6"/><circle cx="400" cy="1152" r="6"/><circle cx="400" cy="1172" r="6"/><circle cx="400" cy="1192" r="6"/><circle cx="400" cy="1212" r="6"/></g>

<!-- tabs icons -->
<use href="#doc" x="402" y="139"/><use href="#doc" x="516" y="137"/><use href="#doc" x="631" y="139"/><use href="#doc" x="744" y="139"/><use href="#doc" x="858" y="139"/><use href="#doc" x="972" y="139"/><use href="#doc" x="1086" y="139"/><use href="#doc" x="1200" y="139"/><use href="#doc" x="1314" y="139"/><use href="#doc" x="1428" y="139"/><use href="#doc" x="1542" y="139"/>
<rect x="1656.500" y="139.500" width="14" height="14" fill="#f2fcff" stroke="#1a5fc0"/><rect x="1657" y="140" width="13" height="3" fill="#2080e0"/><text x="1658" y="152" font-family="Liberation Sans" font-size="10" font-weight="bold" fill="#208020">'s'</text>
<rect x="1770.500" y="139.500" width="14" height="14" fill="#f2fcff" stroke="#1a5fc0"/><rect x="1771" y="140" width="13" height="3" fill="#2080e0"/><text x="1774" y="152" font-family="Liberation Sans" font-size="10" font-weight="bold" fill="#14355f">A</text>
<rect x="1884.500" y="139.500" width="14" height="14" fill="#f2fcff" stroke="#1a5fc0"/><rect x="1885" y="140" width="13" height="3" fill="#2080e0"/><path d="M1893 145h3M1893 148h3M1893 151h3" stroke="#1a4a90"/>
<use href="#xbtn" x="469" y="142"/><use href="#xbtn" x="696" y="142"/><use href="#xbtn" x="810" y="142"/><use href="#xbtn" x="924" y="142"/><use href="#xbtn" x="1038" y="142"/><use href="#xbtn" x="1152" y="142"/><use href="#xbtn" x="1266" y="142"/><use href="#xbtn" x="1380" y="142"/><use href="#xbtn" x="1494" y="142"/><use href="#xbtn" x="1608" y="142"/><use href="#xbtn" x="1722" y="142"/><use href="#xbtn" x="1836" y="142"/>
<rect x="583.500" y="141.500" width="13" height="15" rx="2" fill="#e85c30" stroke="#c04020"/><path d="M587 145l6 7M593 145l-6 7" stroke="#fff" stroke-width="2"/>
<path d="M1892 140v14l-7-7z" fill="#999"/><path d="M1904 140l8 9-8 9z" fill="#111"/>
</svg>

<svg width="0" height="0" style="position:absolute"><defs>
<g id="fi"><rect x=".5" y=".5" width="19" height="19" fill="url(#gf2)" stroke="#3a74d8"/><path d="M14 5.500c-2.500-1-3.500 0-4 3l-1.200 6.500c-.4 1.800-1.500 2.300-3 1.800" fill="none" stroke="#333" stroke-width="1.500"/><path d="M6.500 10h7" stroke="#333" stroke-width="1.300"/></g>
<linearGradient id="gf2" x1="0" y1="0" x2="0" y2="1"><stop offset="0" stop-color="#3f8df0"/><stop offset=".16" stop-color="#9fd0ff"/><stop offset=".28" stop-color="#f2fcff"/><stop offset="1" stop-color="#d8f4ff"/></linearGradient>
</defs></svg>
</body></html>
